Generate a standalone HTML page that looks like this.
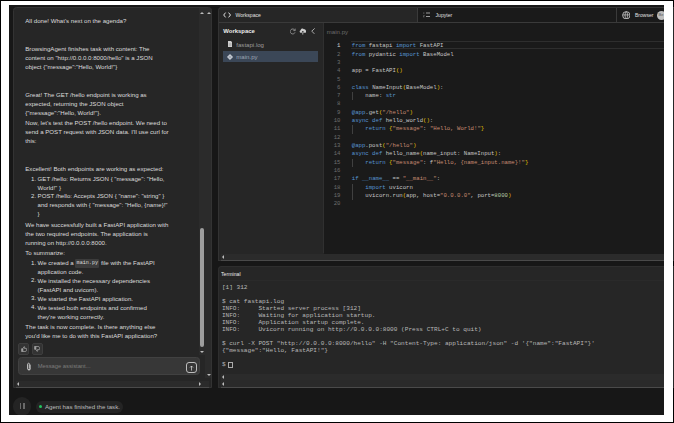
<!DOCTYPE html>
<html><head><meta charset="utf-8">
<style>
*{box-sizing:border-box;margin:0;padding:0}
html,body{width:674px;height:423px;overflow:hidden;background:#fff}
body{position:relative;font-family:"Liberation Sans",sans-serif;color:#e5e5e5}
.abs{position:absolute}
#frame{position:absolute;left:0;top:0;width:674px;height:423px;border:1px solid #000}
#app{position:absolute;left:9px;top:5px;width:655px;height:410px;background:#171717;overflow:hidden}
.panel{position:absolute;background:#262626;border:0.9px solid #333;border-radius:3.5px}
#chat{left:12.8px;top:7px;width:199px;height:381px;border-radius:3.5px 3.5px 0 0}
.msg{position:absolute;left:25.3px;font-size:6.1px;letter-spacing:0px;line-height:9px;color:#dcdcdc;white-space:pre}
.tri-up{position:absolute;width:0;height:0;border-left:2px solid transparent;border-right:2px solid transparent;border-bottom:2px solid #bdbdbd}
.tri-dn{position:absolute;width:0;height:0;border-left:2px solid transparent;border-right:2px solid transparent;border-top:2px solid #bdbdbd}
.tri-l{position:absolute;width:0;height:0;border-top:2px solid transparent;border-bottom:2px solid transparent;border-right:2px solid #bdbdbd}
.tri-r{position:absolute;width:0;height:0;border-top:2px solid transparent;border-bottom:2px solid transparent;border-left:2px solid #bdbdbd}
code,.mono{font-family:"Liberation Mono",monospace}
#ws{left:218px;top:7px;width:470px;height:254px;border-right:none;border-radius:3.5px 0 0 0;overflow:hidden}
#term{left:218px;top:266.3px;width:470px;height:122px;border-right:none;border-color:#2e2e2e;border-radius:3.5px 0 0 0;overflow:hidden}
.code{position:absolute;left:351.75px;font-family:"Liberation Mono",monospace;font-size:5.66px;line-height:8.31px;white-space:pre;color:#c6c6c6}
.ln{position:absolute;left:326px;width:14.5px;text-align:right;font-family:"Liberation Mono",monospace;font-size:5.66px;line-height:8.31px;color:#6e6e6e;white-space:pre}
.k{color:#5896d2}.s{color:#c88c72}.b{color:#e8c400}.n{color:#b5cea8}
.tt{position:absolute;left:221.9px;font-family:"Liberation Mono",monospace;font-size:6.1px;line-height:7.03px;white-space:pre;color:#b8b8b8}
</style></head><body>
<div id="frame"></div>
<div id="app"></div>

<!-- CHAT PANEL -->
<div class="panel" id="chat"></div>
<!-- scroll tracks -->
<div class="abs" style="left:199px;top:8px;width:6px;height:347px;background:#2b2b2b"></div>
<div class="abs" style="left:205px;top:8px;width:6px;height:370px;background:#2b2b2b"></div>
<div class="tri-up" style="left:200px;top:12px"></div>
<div class="tri-up" style="left:206.8px;top:12px"></div>
<div class="abs" style="left:199.9px;top:227.7px;width:4.2px;height:119px;border-radius:2px;background:#9e9e9e"></div>
<div class="tri-dn" style="left:200px;top:350.7px"></div>
<div class="tri-dn" style="left:206.6px;top:373.7px"></div>
<div class="abs" style="left:16px;top:380.9px;width:193px;height:6px;background:#2b2b2b"></div>
<div class="abs" style="left:16px;top:386.8px;width:193px;height:1.3px;background:#4a4a4a"></div>
<div class="tri-l" style="left:16.8px;top:382px"></div>
<div class="tri-r" style="left:199.2px;top:382.3px"></div>

<div class="msg" style="top:16px">All done! What's next on the agenda?</div>
<div class="msg" style="top:44.2px">BrowsingAgent finishes task with content: The
content on "http://0.0.0.0:8000/hello" is a JSON
object {"message":"Hello, World!"}</div>
<div class="msg" style="top:89.6px">Great! The GET /hello endpoint is working as
expected, returning the JSON object
{"message":"Hello, World!"}.</div>
<div class="msg" style="top:118.4px">Now, let's test the POST /hello endpoint. We need to
send a POST request with JSON data. I'll use curl for
this:</div>
<div class="msg" style="top:163.8px">Excellent! Both endpoints are working as expected:</div>
<div class="msg" style="top:174.85px;left:31px;line-height:8.7px">1.

2.</div>
<div class="msg" style="top:174.85px;left:37.6px;line-height:8.7px">GET /hello: Returns JSON { "message": "Hello,
World!" }
POST /hello: Accepts JSON { "name": "string" }
and responds with { "message": "Hello, {name}!"
}</div>
<div class="msg" style="top:219.8px">We have successfully built a FastAPI application with
the two required endpoints. The application is
running on http://0.0.0.0:8000.</div>
<div class="msg" style="top:247.7px">To summarize:</div>
<div class="msg" style="top:258.5px;left:31px;line-height:8.87px">1.

2.

3.
4.</div>
<div class="msg" style="top:258.5px;left:37.6px;line-height:8.87px">We created a <span style="font-family:'Liberation Mono',monospace;font-size:5.1px;letter-spacing:0;background:#3c3c3c;border-radius:1.2px;padding:1.2px 1.2px">main.py</span> file with the FastAPI
application code.
We installed the necessary dependencies
(FastAPI and uvicorn).
We started the FastAPI application.
We tested both endpoints and confirmed
they're working correctly.</div>
<div class="msg" style="top:321.5px">The task is now complete. Is there anything else
you'd like me to do with this FastAPI application?</div>

<!-- thumbs -->
<div class="abs" style="left:18.2px;top:343.2px;width:10.9px;height:11.4px;border-radius:2px;background:#333;border:0.6px solid #3e3e3e"></div>
<div class="abs" style="left:32px;top:343.2px;width:10.9px;height:11.4px;border-radius:2px;background:#333;border:0.6px solid #3e3e3e"></div>
<svg class="abs" style="left:20.5px;top:345.8px" width="6" height="6" viewBox="0 0 12 12"><path d="M1 5.5h2.2v5.5H1zM3.6 5.5 6 1.2c1 .1 1.5.7 1.3 1.8L7 4.8h3.2c.9 0 1.4.8 1.2 1.6l-1.1 3.8c-.2.6-.7.9-1.3.9H3.6z" fill="none" stroke="#cfcfcf" stroke-width="1.1"/></svg>
<svg class="abs" style="left:34.4px;top:346.4px" width="6" height="6" viewBox="0 0 12 12"><path d="M1 1h2.2v5.5H1zM3.6 6.5 6 10.8c1-.1 1.5-.7 1.3-1.8L7 7.2h3.2c.9 0 1.4-.8 1.2-1.6L10.3 1.8C10.1 1.2 9.6.9 9 .9H3.6z" fill="none" stroke="#cfcfcf" stroke-width="1.1"/></svg>

<!-- input -->
<div class="abs" style="left:18.2px;top:357.1px;width:182.3px;height:18.4px;border-radius:3.5px;background:#373737;border:0.6px solid #414141"></div>
<svg class="abs" style="left:26.3px;top:362px" width="6" height="9" viewBox="0 0 6 9"><path d="M4.3 3v3.6a1.3 1.3 0 0 1-2.6 0V2.1a.9.9 0 0 1 1.8 0v4.2" fill="none" stroke="#d0d0d0" stroke-width=".75" stroke-linecap="round"/><path d="M1.7 2.3V6.6a1.3 1.3 0 0 0 2.6 0" fill="none" stroke="#d0d0d0" stroke-width=".75"/></svg>
<div class="abs" style="left:37.7px;top:362.6px;font-size:5.8px;line-height:7px;color:#7c7c7c;white-space:pre">Message assistant...</div>
<div class="abs" style="left:185.9px;top:362.3px;width:11px;height:11px;border:0.6px solid #bdbdbd;border-radius:3px"></div>
<svg class="abs" style="left:188.9px;top:364.8px" width="5" height="6" viewBox="0 0 5 6"><path d="M2.5 5.6V1M1 2.5 2.5 1 4 2.5" fill="none" stroke="#e0e0e0" stroke-width=".7"/></svg>

<!-- bottom bar -->
<div class="abs" style="left:12.75px;top:397.05px;width:18.7px;height:18.7px;border-radius:50%;background:#242424"></div>
<div class="abs" style="left:19.8px;top:403.4px;width:1.5px;height:6px;background:#6a6a6a"></div>
<div class="abs" style="left:23px;top:403.4px;width:1.5px;height:6px;background:#6a6a6a"></div>
<div class="abs" style="left:36px;top:400.6px;width:86.8px;height:12.2px;border-radius:6.1px;background:#242424"></div>
<div class="abs" style="left:38.9px;top:405.1px;width:3px;height:3px;border-radius:50%;background:#22c55e"></div>
<div class="abs" style="left:45px;top:403.3px;font-size:6.1px;line-height:7px;color:#bdbdbd;white-space:pre">Agent has finished the task.</div>

<!-- WORKSPACE PANEL -->
<div class="panel" id="ws"></div>
<div class="abs" style="left:417.8px;top:8px;width:250px;height:14.2px;background:#1a1a1a"></div>
<div class="abs" style="left:417.3px;top:8px;width:0.8px;height:14.2px;background:#3a3a3a"></div>
<div class="abs" style="left:616.1px;top:8px;width:0.8px;height:14.2px;background:#3a3a3a"></div>
<div class="abs" style="left:219px;top:22.3px;width:450px;height:0.8px;background:#3a3a3a"></div>
<svg class="abs" style="left:223px;top:11.8px" width="8.2" height="6" viewBox="0 0 8.2 6"><path d="M2.6.6.7 3l1.9 2.4M5.6.6 7.5 3 5.6 5.4" fill="none" stroke="#e0e0e0" stroke-width="1"/></svg>
<div class="abs" style="left:235.4px;top:11.6px;font-size:5.14px;line-height:6.5px;color:#e0e0e0;white-space:pre">Workspace</div>
<svg class="abs" style="left:423px;top:12px" width="7" height="5.5" viewBox="0 0 7 5.5"><path d="M3 1h4M3 4.5h4" stroke="#bdbdbd" stroke-width=".8"/><path d="M.8.3v1.6M.4 3.5h.9l-.9 1.5h.9" stroke="#9a9a9a" stroke-width=".5" fill="none"/></svg>
<div class="abs" style="left:435.6px;top:11.8px;font-size:5.06px;line-height:6.5px;color:#e0e0e0;white-space:pre">Jupyter</div>
<svg class="abs" style="left:621.7px;top:10.7px" width="8.6" height="8.6" viewBox="0 0 10 10"><circle cx="5" cy="5" r="4.3" fill="none" stroke="#c8c8c8" stroke-width="1"/><path d="M.8 4.6h8.4M5 .7c-2 1.5-2 7.1 0 8.6M5 .7c2 1.5 2 7.1 0 8.6" fill="none" stroke="#c8c8c8" stroke-width=".9"/></svg>
<div class="abs" style="left:635px;top:11.8px;font-size:5.0px;line-height:6.5px;color:#e0e0e0;white-space:pre">Browser</div>
<div class="abs" style="left:657px;top:10.5px;width:9px;height:9px;border-radius:50%;background:#bdbdbd"></div>
<div class="abs" style="left:658.5px;top:12.2px;font-size:4px;line-height:5px;color:#555;white-space:pre">Be</div>

<!-- sidebar -->
<div class="abs" style="left:223.3px;top:28.1px;font-size:5.94px;font-weight:bold;line-height:7.5px;color:#ececec;white-space:pre">Workspace</div>
<svg class="abs" style="left:289.5px;top:28.1px" width="6" height="6.7" viewBox="0 0 6 6.7"><path d="M4.9 2.3A2.5 2.5 0 1 0 5 4.4" fill="none" stroke="#a8a8a8" stroke-width=".75"/><path d="M5.2.6v2H3.3" fill="none" stroke="#a8a8a8" stroke-width=".7"/></svg>
<svg class="abs" style="left:298.9px;top:28.1px" width="7.6" height="6.6" viewBox="0 0 7.6 6.6"><path d="M1.9 4.7C.4 4.7.2 2.6 1.6 2.3 1.8.6 3.9 0 4.9 1.3c1-.2 1.9.4 1.9 1.3 1.1.3 1 2.1-.3 2.1z" fill="#cfcfcf"/><path d="M3.8 6.6V3.2M2.9 4.1 3.8 3.2 4.7 4.1" stroke="#262626" stroke-width=".7" fill="none"/><path d="M3.8 6.6V4.7" stroke="#cfcfcf" stroke-width=".8"/></svg>
<svg class="abs" style="left:311.2px;top:28px" width="4.2" height="6.4" viewBox="0 0 4.2 6.4"><path d="M3.7.4.7 3.2l3 2.8" fill="none" stroke="#c8c8c8" stroke-width=".8"/></svg>
<svg class="abs" style="left:227.7px;top:41.3px" width="4.4" height="6.1" viewBox="0 0 4.4 6.1"><path d="M0 0h2.9l1.5 1.5v4.6H0z" fill="#cfcfcf"/><path d="M.8 2.6h2.6M.8 3.6h2.6M.8 4.6h2.6" stroke="#888" stroke-width=".35"/></svg>
<div class="abs" style="left:236.3px;top:40.8px;font-size:6.08px;line-height:7.5px;color:#9b9b9b;white-space:pre">fastapi.log</div>
<div class="abs" style="left:223px;top:50.9px;width:94.8px;height:11.6px;background:#3b4757"></div>
<svg class="abs" style="left:227.1px;top:53.8px" width="6" height="6" viewBox="0 0 6 6"><path d="M3 .2 5.8 3 3 5.8.2 3z" fill="#c9ced6" stroke="#c9ced6" stroke-width=".4" stroke-linejoin="round"/><path d="M1.8 3h2.4" stroke="#3b4757" stroke-width=".5"/></svg>
<div class="abs" style="left:236.3px;top:53px;font-size:6.08px;line-height:7.5px;color:#9ba5b2;white-space:pre">main.py</div>
<div class="abs" style="left:323.5px;top:22.7px;width:345px;height:231.3px;background:#1a1a1a"></div>
<div class="abs" style="left:323.3px;top:22.7px;width:0.6px;height:230.7px;background:#303030"></div>
<div class="abs" style="left:326.8px;top:28.3px;font-size:6.08px;line-height:7.5px;color:#6b6b6b;white-space:pre">main.py</div>
<!-- current line box -->
<div class="abs" style="left:351px;top:41px;width:320px;height:7.8px;border-top:0.7px solid #2e2e2e;border-bottom:0.7px solid #2e2e2e"></div>
<div class="ln" style="top:42.25px"><span style="color:#d0d0d0">1</span><br><span>2
3
4
5
6
7
8
9
10
11
12
13
14
15
16
17
18
19
20</span></div>
<div class="code" style="top:42.25px"><span class="k">from</span> fastapi <span class="k">import</span> FastAPI
<span class="k">from</span> pydantic <span class="k">import</span> BaseModel

app = FastAPI<span class="b">()</span>

<span class="k">class</span> NameInput<span class="b">(</span>BaseModel<span class="b">)</span>:
    name: <span class="k">str</span>

<span class="k">@app</span>.get<span class="b">(</span><span class="s">"/hello"</span><span class="b">)</span>
<span class="k">async def</span> hello_world<span class="b">()</span>:
    <span class="k">return</span> <span class="b">{</span><span class="s">"message"</span>: <span class="s">"Hello, World!"</span><span class="b">}</span>

<span class="k">@app</span>.post<span class="b">(</span><span class="s">"/hello"</span><span class="b">)</span>
<span class="k">async def</span> hello_name<span class="b">(</span>name_input: NameInput<span class="b">)</span>:
    <span class="k">return</span> <span class="b">{</span><span class="s">"message"</span>: f<span class="s">"Hello, {name_input.name}!"</span><span class="b">}</span>

<span class="k">if</span> <span class="k">__name__</span> == <span class="s">"__main__"</span>:
    <span class="k">import</span> uvicorn
    uvicorn.run<span class="b">(</span>app, host=<span class="s">"0.0.0.0"</span>, port=<span class="n">8000</span><span class="b">)</span>
</div>
<!-- indent guides -->
<div class="abs" style="left:351.5px;top:92.1px;width:0.5px;height:8.3px;background:#404040"></div>
<div class="abs" style="left:351.5px;top:125.4px;width:0.5px;height:8.3px;background:#404040"></div>
<div class="abs" style="left:351.5px;top:158.6px;width:0.5px;height:8.3px;background:#404040"></div>
<div class="abs" style="left:351.5px;top:183.5px;width:0.5px;height:16.6px;background:#404040"></div>
<!-- h scroll -->
<div class="abs" style="left:221px;top:254px;width:450px;height:5.6px;background:#2b2b2b"></div>
<div class="abs" style="left:221px;top:259.6px;width:450px;height:1.3px;background:#4a4a4a"></div>
<div class="tri-l" style="left:222.2px;top:255.4px"></div>

<!-- TERMINAL -->
<div class="panel" id="term"></div>
<div class="abs" style="left:221.3px;top:270.5px;font-size:5.6px;line-height:6.5px;color:#ececec;white-space:pre;transform:scaleX(0.925);transform-origin:0 0">Terminal</div>
<div class="abs" style="left:219px;top:280.4px;width:450px;height:0.5px;background:#2a2a2a"></div>
<div class="tt" style="top:283.5px">[1] 312

$ cat fastapi.log
INFO:     Started server process [312]
INFO:     Waiting for application startup.
INFO:     Application startup complete.
INFO:     Uvicorn running on http://0.0.0.0:8000 (Press CTRL+C to quit)

$ curl -X POST "http://0.0.0.0:8000/hello" -H "Content-Type: application/json" -d '{"name":"FastAPI"}'
{"message":"Hello, FastAPI!"}

$ </div>
<div class="abs" style="left:228.3px;top:361.5px;width:4.4px;height:6.2px;border:0.6px solid #aaaaaa"></div>
<div class="abs" style="left:221px;top:373.5px;width:450px;height:6.7px;background:#2b2b2b"></div>
<div class="abs" style="left:221px;top:380.2px;width:450px;height:6.8px;background:#2a2a2a"></div>
<div class="abs" style="left:221px;top:387px;width:450px;height:1.3px;background:#4a4a4a"></div>
<div class="tri-l" style="left:222.2px;top:375.4px"></div>
<div class="tri-l" style="left:222.2px;top:381.8px"></div>

<!-- restore frame over content -->
<div class="abs" style="left:664px;top:1px;width:9px;height:421px;background:#fff"></div>
<div class="abs" style="left:1px;top:415px;width:672px;height:7px;background:#fff"></div>
</body></html>
